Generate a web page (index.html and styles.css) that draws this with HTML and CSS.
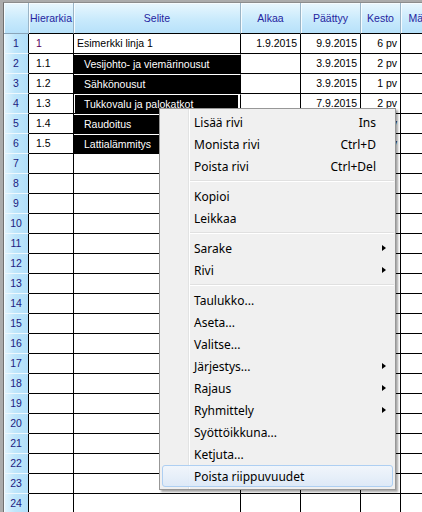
FILE: index.html
```html
<!DOCTYPE html>
<html lang="fi">
<head>
<meta charset="utf-8">
<title>Taulukko</title>
<link rel="stylesheet" href="styles.css">
</head>
<body>
<div class="frame">
  <div class="sheet">
    <div class="row head">
      <div class="c rh corner"></div>
      <div class="c hc">Hierarkia</div>
      <div class="c hc">Selite</div>
      <div class="c hc">Alkaa</div>
      <div class="c hc">Päättyy</div>
      <div class="c hc">Kesto</div>
      <div class="c hc">Määrä</div>
    </div>
    <div class="row">
      <div class="c rh">1</div>
      <div class="c hier first">1</div>
      <div class="c txt">Esimerkki linja 1</div>
      <div class="c num">1.9.2015</div>
      <div class="c num">9.9.2015</div>
      <div class="c num">6 pv</div>
      <div class="c"></div>
    </div>
    <div class="row">
      <div class="c rh">2</div>
      <div class="c hier">1.1</div>
      <div class="c txt sel">Vesijohto- ja viemärinousut</div>
      <div class="c num"></div>
      <div class="c num">3.9.2015</div>
      <div class="c num">2 pv</div>
      <div class="c"></div>
    </div>
    <div class="row">
      <div class="c rh">3</div>
      <div class="c hier">1.2</div>
      <div class="c txt sel">Sähkönousut</div>
      <div class="c num"></div>
      <div class="c num">3.9.2015</div>
      <div class="c num">1 pv</div>
      <div class="c"></div>
    </div>
    <div class="row">
      <div class="c rh">4</div>
      <div class="c hier">1.3</div>
      <div class="c txt sel focus">Tukkovalu ja palokatkot</div>
      <div class="c num"></div>
      <div class="c num">7.9.2015</div>
      <div class="c num">2 pv</div>
      <div class="c"></div>
    </div>
    <div class="row">
      <div class="c rh">5</div>
      <div class="c hier">1.4</div>
      <div class="c txt sel">Raudoitus</div>
      <div class="c num"></div>
      <div class="c num">8.9.2015</div>
      <div class="c num">1 pv</div>
      <div class="c"></div>
    </div>
    <div class="row">
      <div class="c rh">6</div>
      <div class="c hier">1.5</div>
      <div class="c txt sel">Lattialämmitys</div>
      <div class="c num"></div>
      <div class="c num">9.9.2015</div>
      <div class="c num">1 pv</div>
      <div class="c"></div>
    </div>
    <div class="row"><div class="c rh">7</div><div class="c"></div><div class="c"></div><div class="c"></div><div class="c"></div><div class="c"></div><div class="c"></div></div>
    <div class="row"><div class="c rh">8</div><div class="c"></div><div class="c"></div><div class="c"></div><div class="c"></div><div class="c"></div><div class="c"></div></div>
    <div class="row"><div class="c rh">9</div><div class="c"></div><div class="c"></div><div class="c"></div><div class="c"></div><div class="c"></div><div class="c"></div></div>
    <div class="row"><div class="c rh">10</div><div class="c"></div><div class="c"></div><div class="c"></div><div class="c"></div><div class="c"></div><div class="c"></div></div>
    <div class="row"><div class="c rh">11</div><div class="c"></div><div class="c"></div><div class="c"></div><div class="c"></div><div class="c"></div><div class="c"></div></div>
    <div class="row"><div class="c rh">12</div><div class="c"></div><div class="c"></div><div class="c"></div><div class="c"></div><div class="c"></div><div class="c"></div></div>
    <div class="row"><div class="c rh">13</div><div class="c"></div><div class="c"></div><div class="c"></div><div class="c"></div><div class="c"></div><div class="c"></div></div>
    <div class="row"><div class="c rh">14</div><div class="c"></div><div class="c"></div><div class="c"></div><div class="c"></div><div class="c"></div><div class="c"></div></div>
    <div class="row"><div class="c rh">15</div><div class="c"></div><div class="c"></div><div class="c"></div><div class="c"></div><div class="c"></div><div class="c"></div></div>
    <div class="row"><div class="c rh">16</div><div class="c"></div><div class="c"></div><div class="c"></div><div class="c"></div><div class="c"></div><div class="c"></div></div>
    <div class="row"><div class="c rh">17</div><div class="c"></div><div class="c"></div><div class="c"></div><div class="c"></div><div class="c"></div><div class="c"></div></div>
    <div class="row"><div class="c rh">18</div><div class="c"></div><div class="c"></div><div class="c"></div><div class="c"></div><div class="c"></div><div class="c"></div></div>
    <div class="row"><div class="c rh">19</div><div class="c"></div><div class="c"></div><div class="c"></div><div class="c"></div><div class="c"></div><div class="c"></div></div>
    <div class="row"><div class="c rh">20</div><div class="c"></div><div class="c"></div><div class="c"></div><div class="c"></div><div class="c"></div><div class="c"></div></div>
    <div class="row"><div class="c rh">21</div><div class="c"></div><div class="c"></div><div class="c"></div><div class="c"></div><div class="c"></div><div class="c"></div></div>
    <div class="row"><div class="c rh">22</div><div class="c"></div><div class="c"></div><div class="c"></div><div class="c"></div><div class="c"></div><div class="c"></div></div>
    <div class="row"><div class="c rh">23</div><div class="c"></div><div class="c"></div><div class="c"></div><div class="c"></div><div class="c"></div><div class="c"></div></div>
    <div class="row"><div class="c rh">24</div><div class="c"></div><div class="c"></div><div class="c"></div><div class="c"></div><div class="c"></div><div class="c"></div></div>
  </div>

  <div class="menu">
    <div class="item"><span class="label">Lisää rivi</span><span class="key">Ins</span><span class="sub"></span></div>
    <div class="item"><span class="label">Monista rivi</span><span class="key">Ctrl+D</span><span class="sub"></span></div>
    <div class="item"><span class="label">Poista rivi</span><span class="key">Ctrl+Del</span><span class="sub"></span></div>
    <div class="sep"></div>
    <div class="item"><span class="label">Kopioi</span><span class="sub"></span></div>
    <div class="item"><span class="label">Leikkaa</span><span class="sub"></span></div>
    <div class="sep"></div>
    <div class="item"><span class="label">Sarake</span><span class="sub arrow"></span></div>
    <div class="item"><span class="label">Rivi</span><span class="sub arrow"></span></div>
    <div class="sep"></div>
    <div class="item"><span class="label">Taulukko...</span><span class="sub"></span></div>
    <div class="item"><span class="label">Aseta...</span><span class="sub"></span></div>
    <div class="item"><span class="label">Valitse...</span><span class="sub"></span></div>
    <div class="item"><span class="label">Järjestys...</span><span class="sub arrow"></span></div>
    <div class="item"><span class="label">Rajaus</span><span class="sub arrow"></span></div>
    <div class="item"><span class="label">Ryhmittely</span><span class="sub arrow"></span></div>
    <div class="item"><span class="label">Syöttöikkuna...</span><span class="sub"></span></div>
    <div class="item"><span class="label">Ketjuta...</span><span class="sub"></span></div>
    <div class="item hover"><span class="label">Poista riippuvuudet</span><span class="sub"></span></div>
  </div>
</div>
</body>
</html>
```

FILE: styles.css
```css
html, body {
  margin: 0;
  padding: 0;
  width: 422px;
  height: 512px;
  overflow: hidden;
  background: #ababab;
}

.frame {
  position: relative;
  width: 422px;
  height: 512px;
  padding: 2px 0 0 3px;
  box-sizing: border-box;
  overflow: hidden;
  font-family: "Liberation Sans", Arial, sans-serif;
  font-size: 10.5px;
  color: #000;
}

.sheet {
  border-top: 1px solid #8c8c8c;
  border-left: 1px solid #707070;
  background: #fff;
  width: 460px;
}

.row {
  display: grid;
  grid-template-columns: 25px 45px 167px 60px 60px 40px 46px;
  height: 20px;
}

.row.head {
  height: 31px;
}

.c {
  box-sizing: border-box;
  border-right: 1px solid #000;
  border-bottom: 1px solid #000;
  background: #fff;
  white-space: nowrap;
  overflow: hidden;
  display: flex;
  align-items: center;
  line-height: 19px;
}

.head .c {
  background: linear-gradient(#e9f7fe, #c9eafc 55%, #b7e1fa);
  border-right: 1px solid #9ab4c6;
  box-shadow: inset 1px 1px 0 #f6fcff;
  justify-content: center;
  color: #2424a0;
}

.head .corner {
  border-right: 1px solid #9ab4c6;
  border-bottom: 1px solid #8aa4b8;
}

.rh {
  justify-content: center;
  color: #1c1c80;
  background: linear-gradient(to right, #e2f4fe, #bfe6fb 45%, #b2dffa);
  border-bottom: 1px solid #eef8fe;
  box-shadow: inset 1px 0 0 #f3fbff;
}

.hier {
  padding-left: 7px;
}

.hier.first {
  color: #55005a;
}

.txt {
  padding-left: 3px;
}

.txt.sel {
  background: #000;
  color: #fff;
  padding-left: 10px;
  border-top: 1px solid #fff;
}

.txt.sel.focus {
  box-shadow: inset 1px 0 0 #fff, inset -2px 0 0 #fff;
}

.num {
  justify-content: flex-end;
  padding-right: 3px;
}

/* context menu */
.menu {
  position: absolute;
  left: 159px;
  top: 108px;
  width: 237px;
  height: 382px;
  box-sizing: border-box;
  padding: 2px 0;
  background: #f0f0f0;
  border: 1px solid #979797;
  box-shadow: 2px 2px 2px rgba(0, 0, 0, 0.35);
  font-family: "Noto Sans", "Segoe UI", sans-serif;
  font-size: 12px;
  color: #000;
}

.menu::before {
  content: "";
  position: absolute;
  left: 28px;
  top: 0;
  bottom: 0;
  width: 1px;
  background: #e2e3e3;
  border-right: 1px solid #fff;
}

.item {
  position: relative;
  display: flex;
  align-items: center;
  height: 22px;
  box-sizing: border-box;
  margin: 0 2px;
  padding: 0 6px 0 31px;
  border: 1px solid transparent;
  border-radius: 3px;
}

.item.hover {
  border-color: #aecff2;
  background: linear-gradient(rgba(241, 246, 252, 0.9), rgba(220, 233, 248, 0.9));
}

.label {
  flex: 1;
}

.sub {
  width: 4px;
  height: 7px;
  margin-left: 6px;
  box-sizing: border-box;
}

.sub.arrow {
  width: 0;
  height: 0;
  border-left: 4px solid #000;
  border-top: 3.5px solid transparent;
  border-bottom: 3.5px solid transparent;
}

.sep {
  position: relative;
  height: 8px;
  margin: 0 1px 0 30px;
}

.sep::after {
  content: "";
  position: absolute;
  left: 0;
  right: 0;
  top: 3px;
  height: 1px;
  background: #e0e0e0;
  border-bottom: 1px solid #fff;
}
```
